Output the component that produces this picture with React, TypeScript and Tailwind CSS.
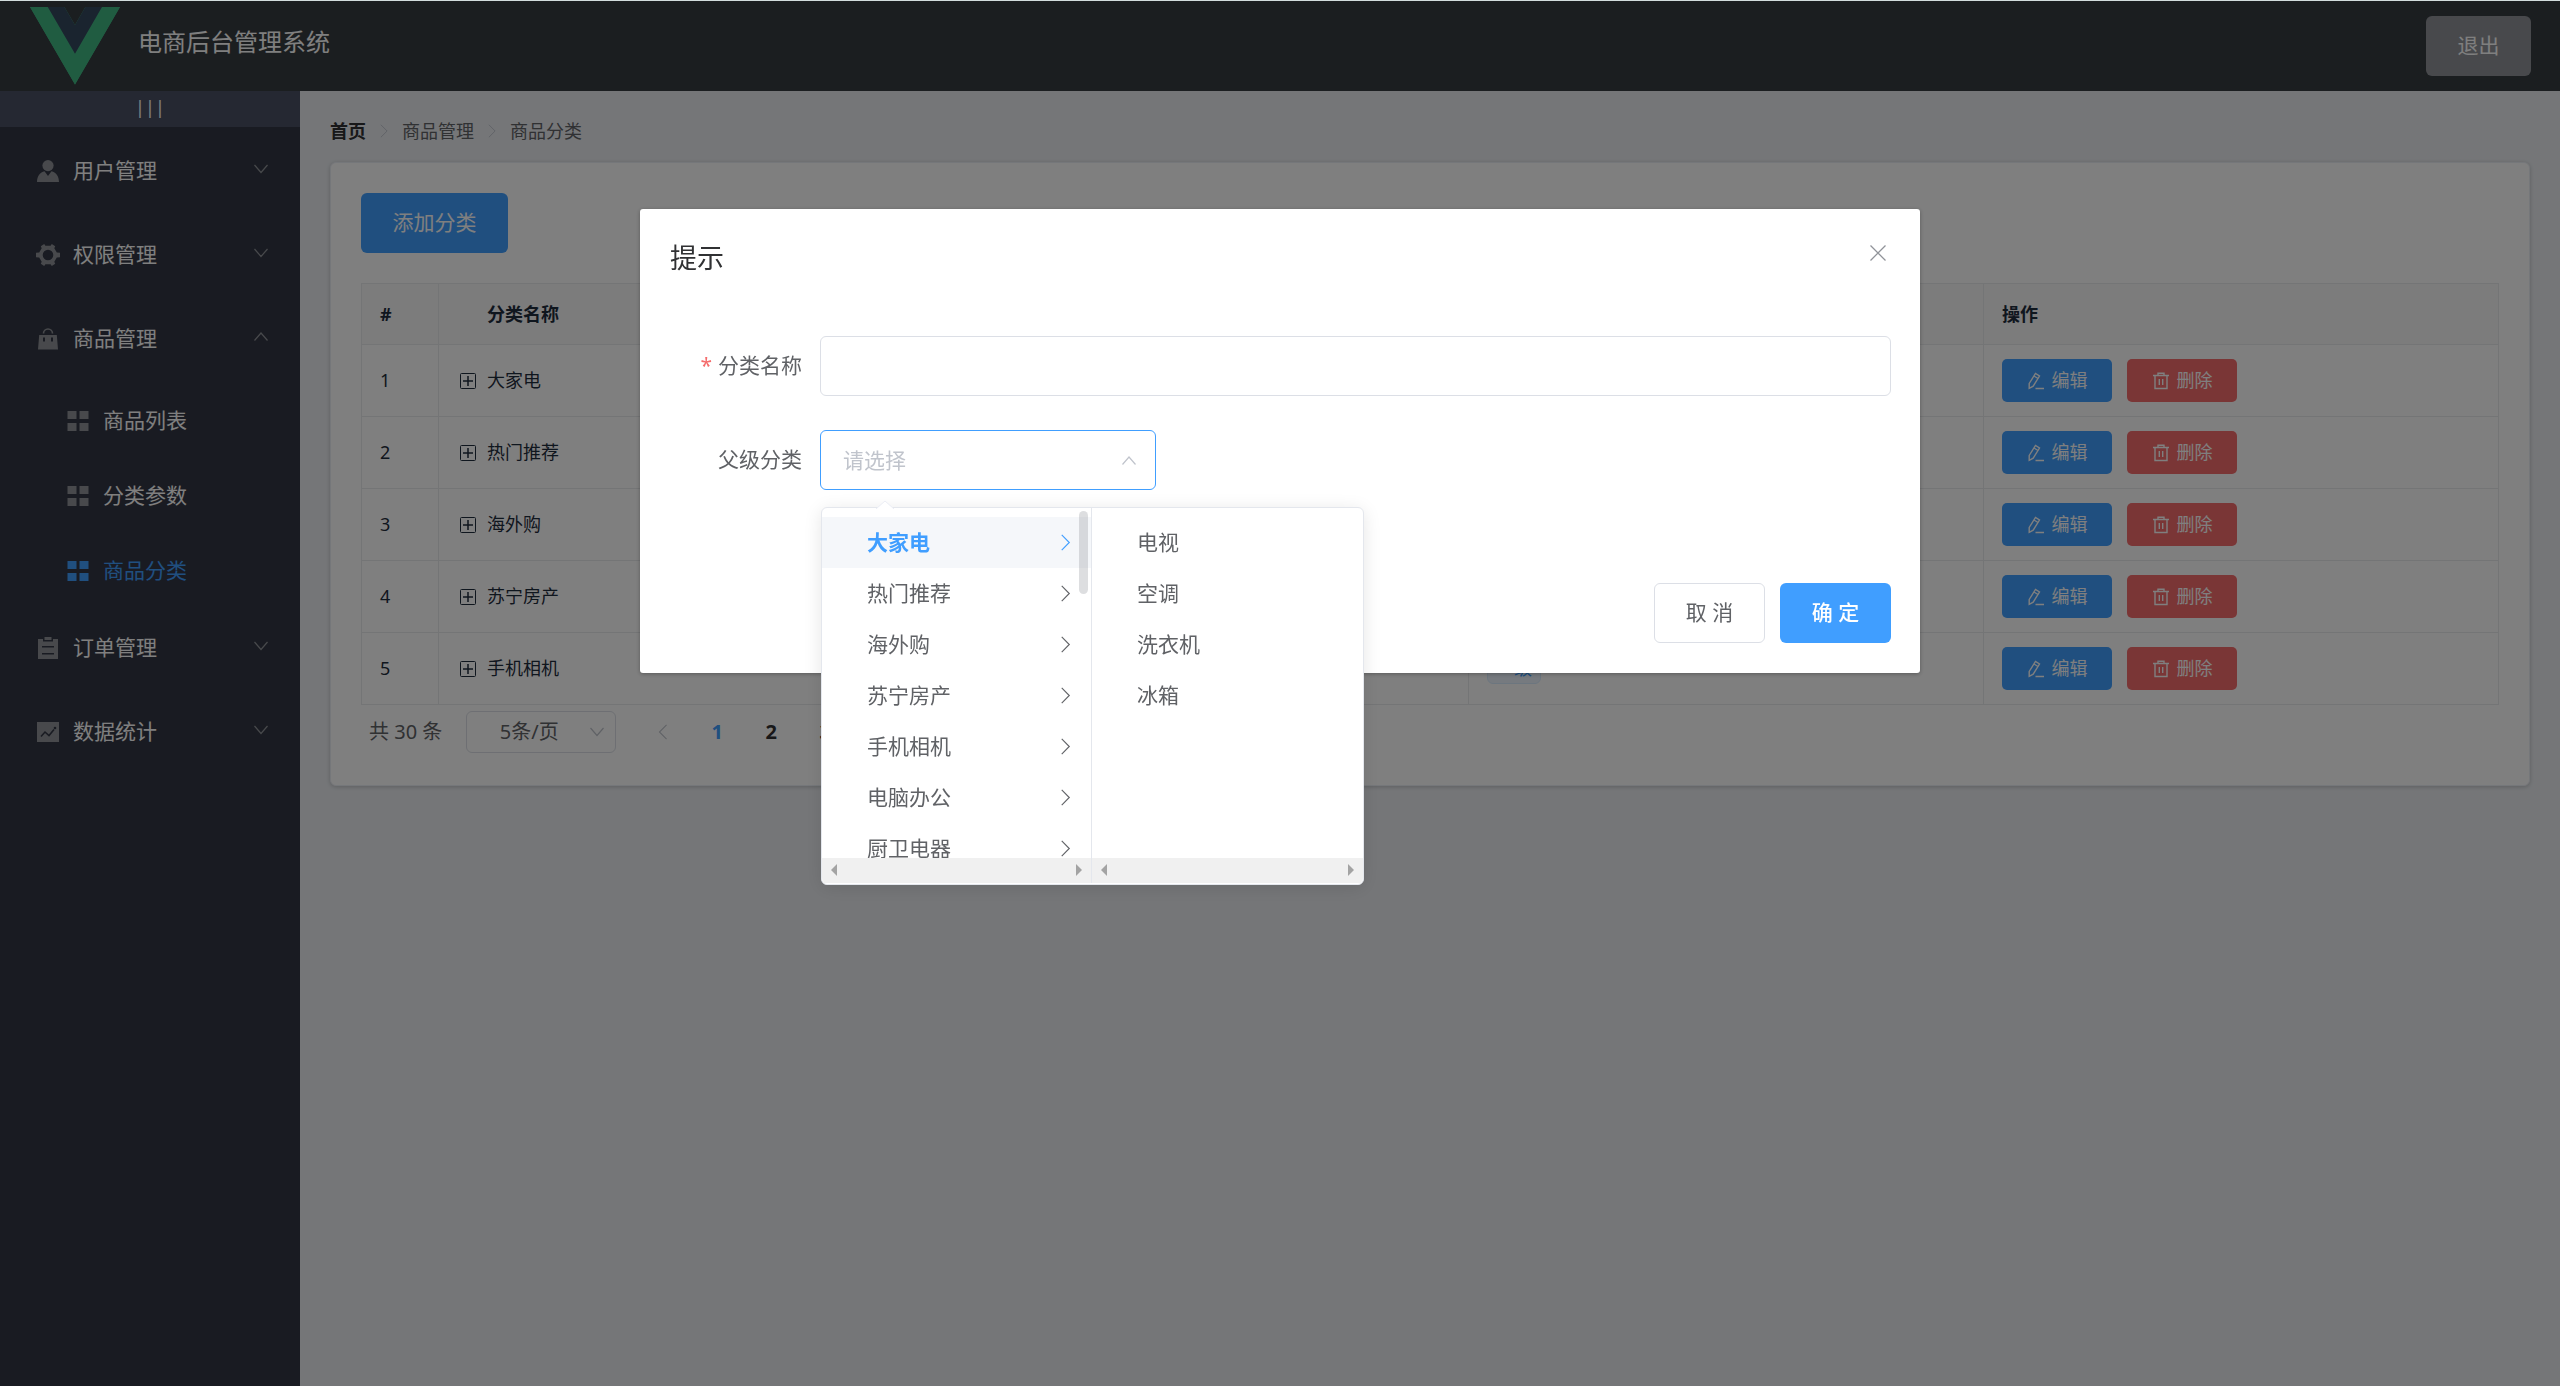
import { useState, ReactNode } from "react";

type Category = { id: number; name: string };

const categories: Category[] = [
    { id: 1, name: "大家电" },
    { id: 2, name: "热门推荐" },
    { id: 3, name: "海外购" },
    { id: 4, name: "苏宁房产" },
    { id: 5, name: "手机相机" },
];

const cascaderParents = ["大家电", "热门推荐", "海外购", "苏宁房产", "手机相机", "电脑办公", "厨卫电器"];
const cascaderChildren = ["电视", "空调", "洗衣机", "冰箱"];

function Chevron({ className, d }: { className: string; d: string }) {
    return (
        <svg viewBox="0 0 18 18" className={className} fill="none" stroke="currentColor" strokeWidth="1.2">
            <path d={d} />
        </svg>
    );
}

const DOWN = "M2.500 5 9 12.500 15.500 5";
const UP = "M2.500 12.500 9 5 15.500 12.500";
const RIGHT = "M5 1 13 9 5 17";
const LEFT = "M13 1 5 9 13 17";

function UserIcon() {
    return (
        <svg viewBox="0 0 24 24" className="size-6" fill="currentColor">
            <circle cx="12" cy="6.6" r="5.6" />
            <path d="M1 23c0-6 3.200-9.800 7.500-10.800L12 17l3.500-4.800C19.800 13.200 23 17 23 23Z" />
        </svg>
    );
}

function GearIcon() {
    return (
        <svg viewBox="0 0 24 24" className="size-6" fill="currentColor">
            <path
                fillRule="evenodd"
                d="M4.800 3.200 8.200 1l1.200 1.800h5.200L15.800 1l3.400 2.200-.9 2L20.800 9.500l3.200.2v4.600l-3.200.2-2.500 4.300.9 2L15.800 23l-1.200-1.800H9.400L8.200 23l-3.400-2.200.9-2L3.200 14.500 0 14.300V9.700l3.200-.2L5.700 5.200ZM12 6.700a5.300 5.300 0 1 0 0 10.600 5.300 5.300 0 0 0 0-10.600Z"
            />
        </svg>
    );
}

function BagIcon() {
    return (
        <svg viewBox="0 0 24 24" className="size-6" fill="currentColor">
            <path fillRule="evenodd" d="M3.200 8h17.600l1.200 14.500H2ZM7 10.500v4h2v-4Zm8 0v4h2v-4Z" />
            <path d="M7.500 6.500a4.500 4.500 0 0 1 9 0" fill="none" stroke="currentColor" strokeWidth="1.600" />
        </svg>
    );
}

function MenuIcon() {
    return (
        <svg viewBox="0 0 24 24" className="size-6" fill="currentColor">
            <path d="M1.500 2h9v8h-9zM13.500 2h9v8h-9zM1.500 14h9v8h-9zM13.500 14h9v8h-9z" />
        </svg>
    );
}

function OrderIcon() {
    return (
        <svg viewBox="0 0 24 24" className="size-6" fill="currentColor">
            <path d="M8.500 1h7v3h-7z" />
            <path fillRule="evenodd" d="M2 3h5v2.500h10V3h5v20H2ZM6 10v1.600h12V10Zm0 7v1.600h12V17Z" />
        </svg>
    );
}

function ChartIcon() {
    return (
        <svg viewBox="0 0 24 24" className="size-6">
            <path d="M1 2h22v20H1z" fill="currentColor" />
            <path d="M5 16.500 9 12l4 3.500L18 9.500" fill="none" stroke="#333744" strokeWidth="1.600" />
            <circle cx="19" cy="8" r="1.300" fill="#333744" />
        </svg>
    );
}

function EditIcon() {
    return (
        <svg viewBox="0 0 18 18" className="size-[18px]" fill="none" stroke="currentColor" strokeWidth="1.400">
            <path d="M2.200 11.500 8.500 1.500 12.500 4 6.200 14.200 2.200 16.300Z" />
            <path d="M7 4 11 6.500M8.500 16.500H17" />
        </svg>
    );
}

function TrashIcon() {
    return (
        <svg viewBox="0 0 18 18" className="size-[18px]" fill="none" stroke="currentColor" strokeWidth="1.400">
            <path d="M1 3.500H17M6 3.500V1.300H12V3.500M3 3.500V16.500H15V3.500M7.300 7V13M10.700 7V13" />
        </svg>
    );
}

function SubMenu({ icon, title, open = false }: { icon: ReactNode; title: string; open?: boolean }) {
    return (
        <button type="button" className="flex h-21 w-full items-center justify-between px-[30px] text-[21px] text-white">
            <span className="flex items-center pt-1">
                <span className="mr-[7px] flex w-9 justify-center text-[#909399]">{icon}</span>
                {title}
            </span>
            <Chevron className="size-[18px] text-[#909399]" d={open ? UP : DOWN} />
        </button>
    );
}

function MenuItem({ title, active = false }: { title: string; active?: boolean }) {
    return (
        <a
            href="#"
            className={`flex h-[75px] items-center pt-2 pl-[60px] text-[21px] ${active ? "text-[#409eff]" : "text-white"}`}
        >
            <span className={`mr-[7px] flex w-9 justify-center ${active ? "" : "text-[#909399]"}`}>
                <MenuIcon />
            </span>
            {title}
        </a>
    );
}

function Sidebar() {
    return (
        <aside className="w-[300px] shrink-0 bg-[#333744]">
            <button
                type="button"
                aria-label="折叠菜单"
                className="flex h-9 w-full items-center justify-center pb-1 text-[18px] text-white bg-[#4a5064]"
            >
                <span>|</span>
                <span>|</span>
                <span>|</span>
            </button>
            <nav>
                <SubMenu icon={<UserIcon />} title="用户管理" />
                <SubMenu icon={<GearIcon />} title="权限管理" />
                <SubMenu icon={<BagIcon />} title="商品管理" open />
                <MenuItem title="商品列表" />
                <MenuItem title="分类参数" />
                <MenuItem title="商品分类" active />
                <SubMenu icon={<OrderIcon />} title="订单管理" />
                <SubMenu icon={<ChartIcon />} title="数据统计" />
            </nav>
        </aside>
    );
}

function CategoryTable() {
    return (
        <table className="w-full table-fixed border-collapse border border-[#e9eaec] text-left text-[18px] text-[#1f2d3d]">
            <colgroup>
                <col className="w-[77px]" />
                <col />
                <col />
                <col />
                <col />
            </colgroup>
            <thead>
                <tr className="h-[61px] bg-[#f8f8f9]">
                    <th className="border border-[#e9eaec] px-[18px]">#</th>
                    <th className="border border-[#e9eaec] pl-12">分类名称</th>
                    <th className="border border-[#e9eaec] px-[18px]">是否有效</th>
                    <th className="border border-[#e9eaec] px-[18px]">排序</th>
                    <th className="border border-[#e9eaec] px-[18px]">操作</th>
                </tr>
            </thead>
            <tbody>
                {categories.map((category) => (
                    <tr key={category.id} className="h-[72px]">
                        <td className="border border-[#e9eaec] px-[18px]">{category.id}</td>
                        <td className="border border-[#e9eaec] px-[21px]">
                            <div className="flex items-center gap-[11px]">
                                <button type="button" aria-label="展开">
                                    <svg viewBox="0 0 16 16" className="size-4" fill="none" stroke="currentColor">
                                        <rect x="0.500" y="0.500" width="15" height="15" rx="1" />
                                        <path d="M3 8H13M8 3V13" strokeWidth="1.500" />
                                    </svg>
                                </button>
                                {category.name}
                            </div>
                        </td>
                        <td className="border border-[#e9eaec] px-[18px] text-[#90ee90]">✔</td>
                        <td className="border border-[#e9eaec] px-[18px]">
                            <span className="flex h-[30px] w-[54px] items-center justify-center rounded-md border border-[#d9ecff] bg-[#ecf5ff] text-[#409eff]">
                                一级
                            </span>
                        </td>
                        <td className="border border-[#e9eaec] px-[18px]">
                            <div className="flex gap-[15px]">
                                <button
                                    type="button"
                                    className="flex h-[43px] w-[110px] items-center justify-center gap-[7px] rounded-[5px] bg-[#409eff] text-white"
                                >
                                    <EditIcon />
                                    编辑
                                </button>
                                <button
                                    type="button"
                                    className="flex h-[43px] w-[110px] items-center justify-center gap-[7px] rounded-[5px] bg-[#f56c6c] text-white"
                                >
                                    <TrashIcon />
                                    删除
                                </button>
                            </div>
                        </td>
                    </tr>
                ))}
            </tbody>
        </table>
    );
}

function Pagination() {
    const [size, setSize] = useState("5");

    return (
        <div className="flex items-center pt-[6px] pl-2 text-[20px] text-[#606266]">
            <span className="mr-6">共 30 条</span>
            <div className="relative mr-5">
                <select
                    aria-label="每页条数"
                    value={size}
                    onChange={(e) => setSize(e.target.value)}
                    className="h-[42px] w-[150px] appearance-none rounded-md border border-[#dcdfe6] pr-6 text-center"
                >
                    <option value="5">5条/页</option>
                    <option value="10">10条/页</option>
                </select>
                <Chevron className="absolute top-3 right-[10px] size-[18px] text-[#c0c4cc]" d={DOWN} />
            </div>
            <button type="button" aria-label="上一页" className="flex w-[54px] justify-center text-[#c0c4cc]">
                <Chevron className="size-4" d={LEFT} />
            </button>
            {["1", "2", "3", "4", "5", "6"].map((page) => (
                <button
                    key={page}
                    type="button"
                    className={`w-[54px] text-center font-bold ${page === "1" ? "text-[#409eff]" : "text-[#303133]"}`}
                >
                    {page}
                </button>
            ))}
            <button type="button" aria-label="下一页" className="flex w-[54px] justify-center">
                <Chevron className="size-4" d={RIGHT} />
            </button>
        </div>
    );
}

// Imitates a native horizontal scrollbar track with its two arrows
function ScrollTrack() {
    return (
        <div className="flex h-[25px] items-center justify-between bg-[#f0f0f0] px-[9px] text-[#a3a3a3]">
            <svg viewBox="0 0 6 12" className="h-3 w-[6px]" fill="currentColor">
                <path d="M6 0V12L0 6Z" />
            </svg>
            <svg viewBox="0 0 6 12" className="h-3 w-[6px]" fill="currentColor">
                <path d="M0 0V12L6 6Z" />
            </svg>
        </div>
    );
}

function CascaderPanel() {
    return (
        <div className="absolute top-full left-px z-10 mt-[17px] w-[543px] rounded-md border border-[#e4e7ed] bg-white text-[21px] text-[#606266] shadow-[0_3px_18px_rgba(0,0,0,0.1)]">
            <svg viewBox="0 0 18 9" className="absolute bottom-full left-[54px] -mb-px h-[9px] w-[18px]" fill="#fff">
                <path d="M0 9 9 1 18 9" stroke="#ebeef5" />
            </svg>
            <div className="flex overflow-hidden rounded-md pb-px">
                <div className="relative w-[270px] border-r border-[#e4e7ed]">
                    <ul className="h-[350px] overflow-hidden pt-[9px]">
                        {cascaderParents.map((name, i) => (
                            <li
                                key={name}
                                className={`flex h-[51px] items-center justify-between pr-[17px] pl-[45px] ${i === 0 ? "bg-[#f5f7fa] font-bold text-[#409eff]" : ""}`}
                            >
                                {name}
                                <Chevron className="size-[17px]" d={RIGHT} />
                            </li>
                        ))}
                    </ul>
                    <div className="absolute top-[3px] right-[3px] h-[83px] w-[9px] rounded-full bg-[#909399]/30" />
                    <ScrollTrack />
                </div>
                <div className="flex-1">
                    <ul className="h-[350px] overflow-hidden pt-[9px]">
                        {cascaderChildren.map((name) => (
                            <li key={name} className="flex h-[51px] items-center pl-[45px]">
                                {name}
                            </li>
                        ))}
                    </ul>
                    <ScrollTrack />
                </div>
            </div>
        </div>
    );
}

function AddCategoryDialog() {
    const [name, setName] = useState("");

    return (
        <div className="fixed inset-x-0 top-px bottom-0 flex items-start justify-center bg-black/50">
            <div
                role="dialog"
                aria-labelledby="dialog-title"
                className="mt-[15vh] w-1/2 rounded-[3px] bg-white text-[21px] text-[#606266] shadow-[0_1px_4px_rgba(0,0,0,0.3)]"
            >
                <div className="flex items-start justify-between pt-[31px] pr-[29px] pb-[15px] pl-[30px]">
                    <h2 id="dialog-title" className="text-[27px] leading-9 text-[#303133]">
                        提示
                    </h2>
                    <button type="button" aria-label="关闭" className="p-1 text-[#909399]">
                        <svg viewBox="0 0 18 18" className="size-[18px]" fill="none" stroke="currentColor" strokeWidth="1.300">
                            <path d="M1.500 1.500 16.500 16.500M16.500 1.500 1.500 16.500" />
                        </svg>
                    </button>
                </div>
                <form className="flex flex-col gap-[34px] pt-[45px] pr-[29px] pb-[78px] pl-[30px]">
                    <div className="flex items-center">
                        <label htmlFor="category-name" className="w-[150px] shrink-0 pr-[18px] text-right">
                            <span className="mr-[6px] text-[#f56c6c]">*</span>
                            分类名称
                        </label>
                        <input
                            id="category-name"
                            type="text"
                            value={name}
                            onChange={(e) => setName(e.target.value)}
                            className="h-[60px] w-full rounded-md border border-[#dcdfe6] px-[22px] outline-none"
                        />
                    </div>
                    <div className="flex items-center">
                        <label htmlFor="category-parent" className="w-[150px] shrink-0 pr-[18px] text-right">
                            父级分类
                        </label>
                        <div className="relative">
                            <input
                                id="category-parent"
                                type="text"
                                readOnly
                                placeholder="请选择"
                                className="block h-[60px] w-[336px] rounded-md border border-[#409eff] px-[22px] outline-none placeholder:text-[#c0c4cc]"
                            />
                            <Chevron className="absolute top-[22px] right-[18px] size-[18px] text-[#c0c4cc]" d={UP} />
                            <CascaderPanel />
                        </div>
                    </div>
                </form>
                <div className="flex justify-end gap-[15px] pt-[15px] pr-[29px] pb-[30px] pl-[30px]">
                    <button type="button" className="h-[60px] w-[111px] rounded-md border border-[#dcdfe6]">
                        取 消
                    </button>
                    <button type="button" className="h-[60px] w-[111px] rounded-md bg-[#409eff] font-medium text-white">
                        确 定
                    </button>
                </div>
            </div>
        </div>
    );
}

export default function App() {
    return (
        <div className="flex min-h-screen flex-col border-t border-[#d3dddd] font-['Noto_Sans','Noto_Sans_CJK_SC',sans-serif]">
            <header className="flex h-[90px] items-center justify-between bg-[#373d41] pr-[29px] text-white">
                <div className="flex h-full items-start gap-[18px] pl-[30px]">
                    <svg viewBox="0 0 256 221" className="mt-[6px] w-[90px]">
                        <path d="M204.800 0H256L128 220.800 0 0h97.920L128 51.200 157.440 0h47.360Z" fill="#41b883" />
                        <path d="M0 0l128 220.800L256 0h-51.200L128 132.480 50.560 0H0Z" fill="#41b883" />
                        <path d="M50.560 0 128 133.120 204.800 0h-47.360L128 51.200 97.920 0H50.560Z" fill="#35495e" />
                    </svg>
                    <h1 className="pt-[23px] text-[24px] leading-9">电商后台管理系统</h1>
                </div>
                <button type="button" className="h-[60px] w-[105px] rounded-md bg-[#909399] text-[21px]">
                    退出
                </button>
            </header>
            <div className="flex flex-1">
                <Sidebar />
                <main className="min-w-0 flex-1 bg-[#eaedf1] p-[30px]">
                    <nav className="mb-[21px] flex h-5 items-center gap-[11px] text-[18px] text-[#606266]">
                        <a href="#" className="font-bold text-[#303133]">
                            首页
                        </a>
                        <Chevron className="size-[14px] text-[#c0c4cc]" d={RIGHT} />
                        <span>商品管理</span>
                        <Chevron className="size-[14px] text-[#c0c4cc]" d={RIGHT} />
                        <span>商品分类</span>
                    </nav>
                    <section className="rounded-md border border-[#ebeef5] bg-white px-[30px] pt-[30px] pb-8 shadow-[0_1px_4px_rgba(0,0,0,0.2)]">
                        <button type="button" className="mb-[30px] h-[60px] w-[147px] rounded-md bg-[#409eff] text-[21px] text-white">
                            添加分类
                        </button>
                        <CategoryTable />
                        <Pagination />
                    </section>
                </main>
            </div>
            <AddCategoryDialog />
        </div>
    );
}
